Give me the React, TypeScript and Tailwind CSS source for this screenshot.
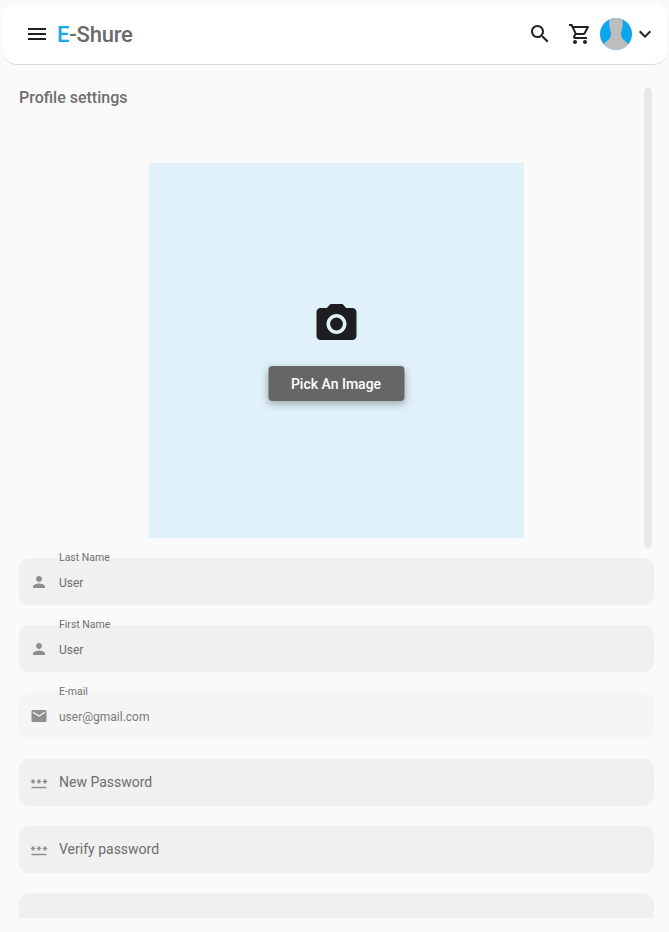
import type { ReactNode } from "react";

const paths = {
  menu: "M3 18h18v-2H3v2zm0-5h18v-2H3v2zm0-7v2h18V6H3z",
  search:
    "M15.5 14h-.79l-.28-.27C15.41 12.59 16 11.11 16 9.5 16 5.91 13.09 3 9.5 3S3 5.91 3 9.5 5.91 16 9.5 16c1.61 0 3.09-.59 4.23-1.57l.27.28v.79l5 4.99L20.49 19l-4.99-5zm-6 0C7.01 14 5 11.99 5 9.5S7.01 5 9.5 5 14 7.01 14 9.5 11.99 14 9.5 14z",
  cart: "M15.55 13c.75 0 1.41-.41 1.75-1.03l3.58-6.49c.37-.66-.11-1.48-.87-1.48H5.21l-.94-2H1v2h2l3.6 7.59-1.35 2.44C4.52 15.37 5.48 17 7 17h12v-2H7l1.1-2h7.45zM6.16 6h12.15l-2.76 5H8.53L6.16 6zM7 18c-1.1 0-1.99.9-1.99 2S5.9 22 7 22s2-.9 2-2-.9-2-2-2zm10 0c-1.1 0-1.99.9-1.99 2s.89 2 1.99 2 2-.9 2-2-.9-2-2-2z",
  chevron: "M16.59 8.59L12 13.17 7.41 8.59 6 10l6 6 6-6z",
  camera:
    "M9 2L7.17 4H4c-1.1 0-2 .9-2 2v12c0 1.1.9 2 2 2h16c1.1 0 2-.9 2-2V6c0-1.1-.9-2-2-2h-3.17L15 2H9zm3 15c-2.76 0-5-2.24-5-5s2.24-5 5-5 5 2.24 5 5-2.24 5-5 5z",
  person:
    "M12 12c2.21 0 4-1.79 4-4s-1.79-4-4-4-4 1.79-4 4 1.79 4 4 4zm0 2c-2.67 0-8 1.34-8 4v2h16v-2c0-2.66-5.33-4-8-4z",
  mail: "M20 4H4c-1.1 0-1.99.9-1.99 2L2 18c0 1.1.9 2 2 2h16c1.1 0 2-.9 2-2V6c0-1.1-.9-2-2-2zm0 4l-8 5-8-5V6l8 5 8-5v2z",
  password:
    "M2 17h20v2H2v-2zm1.15-4.05L4 11.47l.85 1.48 1.3-.75-.85-1.48H7v-1.5H5.3l.85-1.47L4.85 7 4 8.47 3.15 7l-1.3.75.85 1.47H1v1.5h1.7l-.85 1.48 1.3.75zm6.7-.75l1.3.75.85-1.48.85 1.48 1.3-.75-.85-1.48H15v-1.5h-1.7l.85-1.47-1.3-.75L12 8.47 11.15 7l-1.3.75.85 1.47H9v1.5h1.7l-.85 1.48zM23 9.22h-1.7l.85-1.47-1.3-.75L20 8.47 19.15 7l-1.3.75.85 1.47H17v1.5h1.7l-.85 1.48 1.3.75.85-1.48.85 1.48 1.3-.75-.85-1.48H23v-1.5z",
};

function Icon({ d, className, children }: { d: string; className: string; children?: ReactNode }) {
  return (
    <svg viewBox="0 0 24 24" fill="currentColor" className={className}>
      <path d={d} />
      {children}
    </svg>
  );
}

function Avatar() {
  return (
    <svg viewBox="0 0 32 32" className="h-8 w-8 rounded-full">
      <rect width="32" height="32" fill="#0ca6ee" />
      <path
        d="M10 0h12c.8 3 1 6 .5 9-.4 2.500-1.500 4-1.500 6.500 0 3.500 1.500 5.500 3.500 7 1.500 1.200 3.500 3 5.500 4.500v5H2v-5c2-1.500 4-3.300 5.500-4.500 2-1.500 3.500-3.500 3.500-7 0-2.500-1.100-4-1.500-6.500C9 6 9.200 3 10 0z"
        fill="#bdbdbd"
      />
    </svg>
  );
}

function Field({
  icon,
  label,
  value,
  placeholder,
  disabled,
}: {
  icon: string;
  label?: string;
  value?: string;
  placeholder?: string;
  disabled?: boolean;
}) {
  return (
    <div
      className={`relative flex h-[47px] shrink-0 items-center gap-[11px] rounded-[10px] pl-[11px] ${
        disabled ? "bg-[#f5f5f5]" : "bg-[#f0f0f0]"
      }`}
    >
      {label && (
        <span className="absolute top-[-8px] left-10 text-[10.5px] leading-[15px] text-[#707070]">{label}</span>
      )}
      <Icon d={icon} className="h-[18px] w-[18px] text-[#8f8f8f]" />
      {value && (
        <span className={`mt-[2px] text-xs ${disabled ? "text-[#7a7a7a]" : "text-[#6e6e6e]"}`}>{value}</span>
      )}
      {placeholder && <span className="mt-[-1px] text-sm text-[#6e6e6e]">{placeholder}</span>}
    </div>
  );
}

export default function App() {
  return (
    <div className="h-[932px] w-[669px] overflow-hidden bg-[#fafafa] font-['Roboto',sans-serif]">
      <header className="ml-[3px] mr-[2px] mt-[4px] flex h-[61px] items-center rounded-[14px] border-b border-[#d9d9d9] bg-white pl-[22px] pr-[10px]">
        <Icon d={paths.menu} className="h-6 w-6 text-[#212121]" />
        <div className="ml-[8px] text-[22px] font-medium tracking-[-0.2px] text-[#6b6b6b]">
          <span className="text-[#1aa7ec]">E</span>-Shure
        </div>
        <div className="ml-auto flex items-center">
          <Icon d={paths.search} className="h-6 w-6 text-[#212121]" />
          <Icon d={paths.cart} className="ml-[16px] h-6 w-6 text-[#212121]" />
          <div className="ml-[8px]">
            <Avatar />
          </div>
          <Icon d={paths.chevron} className="ml-[1px] h-6 w-6 text-[#212121]" />
        </div>
      </header>

      <main className="relative flex h-[853px] flex-col overflow-hidden pl-[19px] pr-[15px]">
        <h1 className="mt-[23px] text-base leading-5 font-medium text-[#6e6e6e]">Profile settings</h1>
        <div className="mx-auto mt-[55px] flex h-[375px] w-[375px] shrink-0 flex-col items-center justify-center bg-[#e1f1fa]">
          <Icon d={paths.camera} className="h-12 w-12 -translate-x-[0.5px] text-[#1c1e21]">
            <circle cx="12" cy="12" r="3.2" />
          </Icon>
          <button className="mt-[18px] h-[35px] w-[136px] -translate-x-[0.5px] rounded bg-[#666666] text-sm font-medium text-white shadow-[0_3px_8px_rgba(0,0,0,0.3)]">
            Pick An Image
          </button>
        </div>
        <div className="mt-5 flex flex-col gap-5">
          <Field icon={paths.person} label="Last Name" value="User" />
          <Field icon={paths.person} label="First Name" value="User" />
          <Field icon={paths.mail} label="E-mail" value="user@gmail.com" disabled />
          <Field icon={paths.password} placeholder="New Password" />
          <Field icon={paths.password} placeholder="Verify password" />
          <div className="h-[47px] shrink-0 rounded-[10px] bg-[#f0f0f0]" />
        </div>
        <div className="absolute top-[23px] left-[644px] h-[460px] w-2 rounded-[4px] bg-[#e8e8e8]" />
      </main>
    </div>
  );
}
